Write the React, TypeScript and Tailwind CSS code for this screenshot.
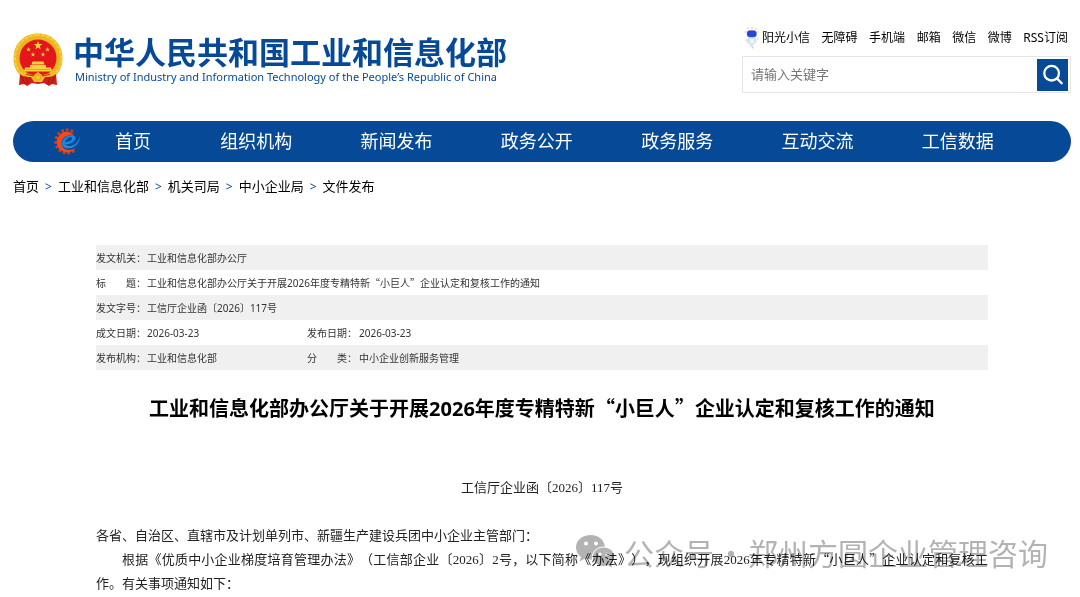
import type { ReactNode } from 'react';

const SANS = "font-['Noto_Sans','Noto_Sans_CJK_SC',sans-serif]";

/* Full-width Chinese quotation marks around a phrase. */
function Quoted({ children }: { children: ReactNode }) {
  return (
    <>
      <span className="font-['Noto_Sans_CJK_SC',sans-serif] leading-none">“</span>
      {children}
      <span className="font-['Noto_Sans_CJK_SC',sans-serif] leading-none">”</span>
    </>
  );
}

const star = (cx: number, cy: number, r: number) =>
  Array.from({ length: 10 }, (_, i) => {
    const a = (Math.PI / 5) * i - Math.PI / 2;
    const q = i % 2 ? r * 0.42 : r;
    return `${(cx + q * Math.cos(a)).toFixed(2)},${(cy + q * Math.sin(a)).toFixed(2)}`;
  }).join(' ');

function Emblem() {
  return (
    <svg viewBox="0 0 50 54" className="h-[54px] w-[50px] shrink-0" aria-hidden="true">
      <path d="M25 .5C11 .5 .5 11 .5 25c0 8 3 14 8 19h33c5-5 8-11 8-19C49.500 11 39 .5 25 .5Z" fill="#eeb51d" />
      <path d="M25 2C12 2 2 12 2 25c0 7 2.500 12 7 17h32c4.500-5 7-10 7-17C48 12 38 2 25 2Z" fill="none" stroke="#f8d347" strokeWidth="2" strokeDasharray="4 1" strokeOpacity=".8" />
      <path d="M7 41c4 1 8 1 12 3l6 1 6-1c4-2 8-2 12-3l1 11-5-1-3 2-5-3-6 1-6-1-5 3-3-2-5 1Z" fill="#d01e18" />
      <path d="M8 42l4 9M42 42l-4 9M13 43l2 8M37 43l-2 8" stroke="#9e1712" strokeWidth="1" />
      <circle cx="25" cy="25" r="18.500" fill="#e3171b" />
      <g fill="#f9d33b">
        <polygon points={star(25, 12.500, 4.500)} />
        <polygon points={star(15.500, 16.500, 2.400)} />
        <polygon points={star(34.500, 16.500, 2.400)} />
        <polygon points={star(20, 21.500, 2.400)} />
        <polygon points={star(30, 21.500, 2.400)} />
        <path d="M19.500 28.500h11l1 3h-13ZM17 32h16v2.500H17ZM12 34.500h26l1 4H11Z" />
      </g>
      <path d="M13 36.500h24" stroke="#dc8f1a" strokeWidth=".7" />
      <path d="M10 37c3 5 8 4 11 5l4-3 4 3c3-1 8 0 11-5l3 4c-3 3-7 3-11 3l-3 5h-8l-3-5c-4 0-8 0-11-3Z" fill="#f2bf27" />
      <path d="M13 41c4 2 6 1 8 2M37 41c-4 2-6 1-8 2" stroke="#d52a18" strokeWidth="1.200" fill="none" />
      <circle cx="25" cy="44.500" r="2.800" fill="#f5c52c" stroke="#dc7a18" strokeWidth=".5" />
    </svg>
  );
}

function Mascot() {
  return (
    <svg viewBox="0 0 14 22" className="h-[22px] w-[14px]" aria-hidden="true">
      <path d="M3 10.500C1 13 1 16 3 17l1-1 1 4h3l1-4 1 1c2-1 2-4 0-6.500Z" fill="#d5e5f8" />
      <path d="M5 12h4l-1 4H6Z" fill="#f4f8ff" />
      <rect x="1.500" y="3" width="10.500" height="8" rx="4" fill="#b9cdf4" />
      <rect x="2" y="3.500" width="9.500" height="6.500" rx="3" fill="#2746d8" />
      <g fill="#f9c44b">
        <circle cx="3" cy="1.500" r=".8" />
        <circle cx="7" cy=".9" r=".8" />
        <circle cx="11" cy="1.800" r=".8" />
        <circle cx="13" cy="5" r=".7" />
        <circle cx=".8" cy="5" r=".7" />
        <circle cx="1" cy="13" r=".7" />
        <circle cx="12.500" cy="12" r=".7" />
        <circle cx="7.500" cy="20.800" r=".8" />
      </g>
    </svg>
  );
}

function GearLogo() {
  return (
    <svg viewBox="0 0 28 28" className="h-[28px] w-[28px]" aria-hidden="true">
      <path d="M20 3.600A11.500 11.500 0 1 0 22 22" fill="none" stroke="#d9391f" strokeWidth="3" strokeDasharray="2.600 2.100" />
      <path d="M21 6.500A10.300 10.300 0 1 0 22.500 20C17.500 23.500 9.500 22.500 8.500 16 8 10.500 13 6.500 21 6.500Z" fill="#f04a1b" />
      <path d="M8.500 16C9 11 14 7 19 7c5 .5 4.500 5.500-.5 8-2.500 1.200-5 1.500-6.500 1 1.500 3 7 2.500 10.500 0 2.500-2 4-4.500 4.500-8-.2 6-3.500 10.500-8.500 12-4.500 1.200-9 0-10-4Zm3.500-2c3 0 7-1.500 7-3.500 0-2.500-5.500-1-7 3.500Z" fill="#1c86dc" />
      <path d="M11 16.500c1.500 3 8 2.500 11.500-.5 2.500-2 4-4.500 4.500-8-1 5-4.500 9-9 10-3.500.5-6 0-7-1.500Z" fill="#54aee9" />
    </svg>
  );
}

const quickLinks = ['阳光小信', '无障碍', '手机端', '邮箱', '微信', '微博', 'RSS订阅'];
const sections = ['组织机构', '新闻发布', '政务公开', '政务服务', '互动交流', '工信数据'];
const crumbs = ['首页', '工业和信息化部', '机关司局', '中小企业局', '文件发布'];

function Header() {
  return (
    <header className="flex items-start justify-between">
      <a href="#" className="flex gap-[10px] pt-[33px] text-[#064a97]">
        <Emblem />
        <span className="flex flex-col whitespace-nowrap">
          <span className="font-['Noto_Sans_CJK_SC',sans-serif] text-[31px] leading-[36px] font-bold">中华人民共和国工业和信息化部</span>
          <span className="pl-[2px] text-[11px] leading-[16px]">
            Ministry of Industry and Information Technology of the People’s Republic of China
          </span>
        </span>
      </a>
      <div className="w-[329px] pt-[27px]">
        <nav className="flex h-[21px] items-center justify-between pr-[3px] pl-[3px] text-[12px] whitespace-nowrap">
          {quickLinks.map((label, i) => (
            <a key={label} href="#" className="flex items-center gap-[3px] text-black">
              {i === 0 && <Mascot />}
              {label}
            </a>
          ))}
        </nav>
        <form className="mt-2 flex h-[37px] items-center border border-[#e6e6e6] pr-[2px]">
          <input
            type="text"
            aria-label="请输入关键字"
            placeholder="请输入关键字"
            className="min-w-0 flex-1 px-2 text-[13px] outline-none placeholder:text-[#757575]"
          />
          <button type="button" aria-label="搜索" className="flex h-8 w-[31px] items-center justify-center bg-[#064a97]">
            <svg viewBox="0 0 24 24" className="h-[22px] w-[22px]" fill="none" stroke="white" strokeWidth="2.500" strokeLinecap="round" aria-hidden="true">
              <circle cx="10.500" cy="10" r="8" />
              <path d="m16.500 16 5 5" />
            </svg>
          </button>
        </form>
      </div>
    </header>
  );
}

const cell = 'h-[25px] p-0 text-left align-middle font-normal';

function Field({ label, children, span }: { label: string; children: ReactNode; span?: number }) {
  const spread = label.length === 2;
  return (
    <>
      <th scope="row" className={cell}>
        {spread ? (
          <span className="flex w-[50px]">
            <span>{label[0]}</span>
            <span className="ml-5">{label[1]}：</span>
          </span>
        ) : (
          label + '：'
        )}
      </th>
      <td className={cell} colSpan={span}>{children}</td>
    </>
  );
}

function Watermark() {
  return (
    <div className="pointer-events-none absolute -top-[16px] -right-[60px] flex items-center gap-[9px] whitespace-nowrap text-[#b3b3b3] mix-blend-multiply">
      <svg viewBox="0 0 40 34" className="h-[34px] w-[40px]" aria-hidden="true">
        <path d="M16 0C7 0 1 5.500 1 12.500c0 4 2 7 5 9.500l-1.500 4.500L10 23.500c2 .7 4 1 6 1h1C15.500 17 22 11 30 11.500 29 5 23.500 0 16 0Z" fill="currentColor" />
        <path d="M39 21.500C39 16 34.500 12.500 28.500 12.500S18 16.500 18 21.500s4.500 9.500 10.500 9.500c1.500 0 3-.3 4.500-.8l4 2.300-1-3.500c2-2 3-4.500 3-7.500Z" fill="currentColor" />
        <g fill="white">
          <circle cx="11" cy="8.500" r="2" />
          <circle cx="21" cy="8.500" r="2" />
          <circle cx="25" cy="19" r="1.600" />
          <circle cx="32" cy="19" r="1.600" />
        </g>
      </svg>
      <span className="flex font-['Noto_Sans_CJK_SC',sans-serif] text-[30px] leading-[40px] font-normal">
        <span>公众号</span>
        <span className="w-[34px] text-center">·</span>
        <span>郑州方圆企业管理咨询</span>
      </span>
    </div>
  );
}

export default function App() {
  return (
    <div className={`min-h-screen overflow-hidden bg-white pr-[9px] pl-[13px] text-black ${SANS}`} lang="zh-CN">
      <Header />

      <nav className="mt-[28px] flex h-[41px] items-center rounded-full bg-[#064a97] pl-[40px] text-[18px] text-white">
        <GearLogo />
        <a href="#" className="ml-[34px] w-[71px]">首页</a>
        <div className="flex flex-1 pr-[43px]">
          {sections.map((label) => (
            <a key={label} href="#" className="flex-1 text-center whitespace-nowrap">{label}</a>
          ))}
        </div>
      </nav>

      <nav aria-label="面包屑" className="mt-[15px] flex h-[20px] items-center text-[13px]">
        {crumbs.map((label, i) => (
          <span key={label} className="flex items-center">
            {i > 0 && <span className="px-[6px] text-[12px] text-[#064a97]">&gt;</span>}
            <a href="#">{label}</a>
          </span>
        ))}
      </nav>

      <main className="mt-[48px] px-[83px]">
        <table className="w-full table-fixed border-collapse text-[10px] leading-[14px] text-[#333]">
          <colgroup>
            <col className="w-[51px]" />
            <col className="w-[160px]" />
            <col className="w-[52px]" />
            <col />
          </colgroup>
          <tbody>
            <tr className="bg-[#f0f0f0]"><Field label="发文机关" span={3}>工业和信息化部办公厅</Field></tr>
            <tr>
              <Field label="标题" span={3}>
                工业和信息化部办公厅关于开展2026年度专精特新<Quoted>小巨人</Quoted>企业认定和复核工作的通知
              </Field>
            </tr>
            <tr className="bg-[#f0f0f0]"><Field label="发文字号" span={3}>工信厅企业函〔2026〕117号</Field></tr>
            <tr>
              <Field label="成文日期">2026-03-23</Field>
              <Field label="发布日期">2026-03-23</Field>
            </tr>
            <tr className="bg-[#f0f0f0]">
              <Field label="发布机构">工业和信息化部</Field>
              <Field label="分类">中小企业创新服务管理</Field>
            </tr>
          </tbody>
        </table>

        <h1 className="mt-[23px] text-center text-[20px] leading-[32px] font-bold whitespace-nowrap">
          工业和信息化部办公厅关于开展2026年度专精特新<Quoted>小巨人</Quoted>企业认定和复核工作的通知
        </h1>

        <article className="mt-[51px] font-['Liberation_Serif','Noto_Sans_CJK_SC',serif] text-[13px] leading-[24px] text-[#222] [text-spacing-trim:space-all]">
          <p className="text-center">工信厅企业函〔2026〕117号</p>
          <p className="mt-[24px]">各省、自治区、直辖市及计划单列市、新疆生产建设兵团中小企业主管部门：</p>
          <div className="relative">
            <p className="text-justify indent-[26px]">
              根据《优质中小企业梯度培育管理办法》（工信部企业〔2026〕2号，以下简称《办法》），现组织开展2026年专精特新<Quoted>小巨人</Quoted>企业认定和复核工作。有关事项通知如下：
            </p>
            <Watermark />
          </div>
        </article>
      </main>
    </div>
  );
}
